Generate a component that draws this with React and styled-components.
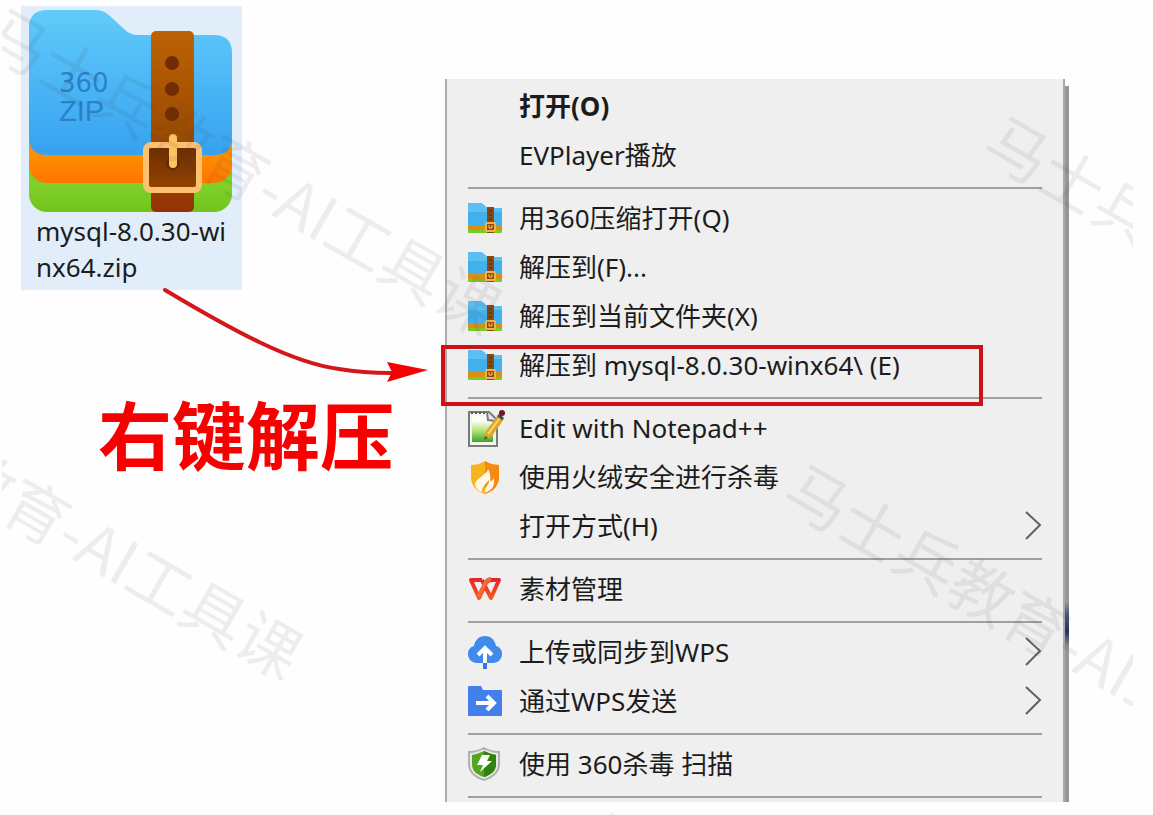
import React from 'react'
import styled, { createGlobalStyle, css } from 'styled-components'

const GlobalStyle = createGlobalStyle`
  * {
    box-sizing: border-box;
  }
  body {
    margin: 0;
    background: #fefefe;
    color: #1c1c1c;
    font-family: "Noto Sans", "Noto Sans CJK SC", sans-serif;
  }
`

const Page = styled.main`
  position: relative;
  display: grid;
  grid-template-columns: 445px minmax(0, 1fr);
  min-height: 100vh;
  padding-right: 84px;
  overflow: hidden;
`

const Aside = styled.section`
  display: flex;
  flex-direction: column;
  align-items: flex-start;
  padding: 6px 0 0 21px;
`

const FileTile = styled.figure`
  width: 221px;
  margin: 0;
  padding: 4px 8px 5px;
  background: #e1eefa;
  svg {
    display: block;
  }
  figcaption {
    padding: 0 7px;
    font-size: 26px;
    line-height: 36px;
    word-break: break-all;
  }
`

const Arrow = styled.svg`
  display: block;
  margin: -3px 0 0 141px;
`

const Caption = styled.h1`
  margin: 0 0 0 77px;
  color: #f90000;
  font-family: "Noto Sans CJK SC", sans-serif;
  font-size: 74px;
  font-weight: 700;
  line-height: 94px;
`

const MenuArea = styled.section`
  padding: 79px 0 12px;
`

const Menu = styled.ul`
  position: relative;
  margin: 0 4px 0 0;
  padding: 4px 21px 0;
  list-style: none;
  background: #efefef;
  border-left: 2px solid #adadad;
  border-right: 2px solid #aaa;
  &::after {
    content: "";
    position: absolute;
    top: 7px;
    right: -6px;
    bottom: 0;
    width: 4px;
    background: linear-gradient(#969696 516px, #47597f 528px, #24365f 546px, #9c9690 562px, #969696 580px);
  }
`

const Item = styled.li`
  position: relative;
`

const Divider = styled.li`
  height: 14px;
  padding: 6px 0;
  &::before {
    content: "";
    display: block;
    height: 2px;
    background: #9f9f9f;
  }
  &:last-child {
    height: 12px;
    padding-bottom: 4px;
  }
`

const MenuButton = styled.button`
  display: grid;
  grid-template-columns: 34px minmax(0, 1fr) auto;
  align-items: center;
  column-gap: 17px;
  width: 100%;
  height: 49px;
  padding: 0 0 3px;
  border: 0;
  background: none;
  color: inherit;
  font-family: inherit;
  font-size: 26px;
  line-height: 36px;
  text-align: left;
  white-space: nowrap;
  cursor: pointer;
  ${props => props.$bold && css`
    font-weight: 700;
  `}
  svg {
    display: block;
  }
`

const Highlight = styled.span`
  position: absolute;
  top: 3px;
  left: -27px;
  right: 59px;
  height: 61px;
  border: 4px solid #cd1216;
  pointer-events: none;
`

const Watermarks = styled.div`
  position: absolute;
  top: 0;
  bottom: 0;
  left: 2px;
  right: 20px;
  overflow: hidden;
  pointer-events: none;
`

const Watermark = styled.span`
  position: absolute;
  left: ${props => props.$x}px;
  top: ${props => props.$y}px;
  color: rgba(70, 70, 70, .09);
  font-family: "Noto Sans CJK SC", sans-serif;
  font-size: 63px;
  line-height: 64px;
  white-space: nowrap;
  transform: rotate(30deg);
  transform-origin: 32px 32px;
`

function FolderLogo() {
  return (
    <svg width="205" height="203" viewBox="0 0 205 203" aria-hidden="true">
      <defs>
        <linearGradient id="blue" x1="0" y1="0" x2="0" y2="1">
          <stop offset="0" stopColor="#61cbfa" />
          <stop offset="1" stopColor="#36a2f0" />
        </linearGradient>
        <linearGradient id="orange" x1="0" y1="0" x2="0" y2="1">
          <stop offset=".75" stopColor="#ff9200" />
          <stop offset="1" stopColor="#ff7500" />
        </linearGradient>
        <linearGradient id="green" x1="0" y1="0" x2="0" y2="1">
          <stop offset=".8" stopColor="#7fd02a" />
          <stop offset="1" stopColor="#71c41c" />
        </linearGradient>
        <linearGradient id="strap" x1="0" y1="0" x2="0" y2="1">
          <stop offset="0" stopColor="#bd6205" />
          <stop offset=".6" stopColor="#9b4a02" />
          <stop offset="1" stopColor="#943305" />
        </linearGradient>
        <linearGradient id="tuck" x1="0" y1="0" x2="0" y2="1">
          <stop offset="0" stopColor="#6b2c00" />
          <stop offset="1" stopColor="#944403" />
        </linearGradient>
      </defs>
      <rect y="70" width="203" height="132" rx="18" fill="url(#green)" />
      <rect y="45" width="203" height="128" rx="18" fill="url(#orange)" />
      <path d="M18 0H67Q75 0 81 6L95 19Q101 25 109 25H185Q203 25 203 43V127Q203 145 185 145H18Q0 145 0 127V18Q0 0 18 0Z" fill="url(#blue)" />
      <g fill="#2c80c9">
        <text x="30" y="82" fontFamily="DejaVu Sans" fontSize="26">360</text>
        <text x="30" y="111" fontFamily="Liberation Sans" fontSize="29">ZIP</text>
      </g>
      <rect x="122" y="21" width="43" height="181" rx="5" fill="url(#strap)" />
      <g fill="#702c02">
        <circle cx="143" cy="53" r="7" />
        <circle cx="143" cy="79" r="7" />
        <circle cx="143" cy="104" r="7" />
      </g>
      <rect x="117" y="135" width="53" height="45" rx="5" fill="url(#tuck)" stroke="#fdc170" strokeWidth="6" />
      <circle cx="144" cy="153" r="7" fill="#652a02" />
      <rect x="140" y="124" width="8" height="34" rx="4" fill="#fcc361" />
    </svg>
  )
}

function ZipIcon() {
  return (
    <svg width="34" height="30" viewBox="0 0 34 30" aria-hidden="true">
      <rect y="12" width="34" height="18" rx="1" fill="#7cc928" />
      <rect y="12" width="34" height="15" fill="#d98f12" />
      <path d="M1 0H12Q14 0 16 2L19 5H33Q34 5 34 6V22H0V1Q0 0 1 0Z" fill="#42b0ec" />
      <path d="M1 0H12Q14 0 16 2L19 5H33Q34 5 34 6V9H0V1Q0 0 1 0Z" fill="#5bbff0" />
      <rect x="19" y="4" width="7" height="26" fill="#864a15" />
      <path d="M21 8h3M21 12h3M21 16h3" stroke="#6e3a0c" strokeWidth="2" />
      <rect x="18" y="20" width="9" height="8" rx="1" fill="#8a4a12" stroke="#f3b04d" strokeWidth="2" />
      <path d="M21 22v3M24 22v3M21 25h3" stroke="#fbd070" strokeWidth="1" />
    </svg>
  )
}

function NotepadIcon() {
  return (
    <svg width="37" height="38" viewBox="0 0 37 38" aria-hidden="true">
      <defs>
        <linearGradient id="page" x1="0" y1="0" x2="0" y2="1">
          <stop offset=".2" stopColor="#fbfdf7" />
          <stop offset=".55" stopColor="#b5e67c" />
          <stop offset="1" stopColor="#3aa524" />
        </linearGradient>
      </defs>
      <path d="M1 3H21L29 11V37H1Z" fill="#f4f5f2" stroke="#777b7b" strokeWidth="2" />
      <path d="M4 7H20L25 12V33H4Z" fill="url(#page)" />
      <path d="M3 4h17" stroke="#565b5b" strokeWidth="2" strokeDasharray="2 2" />
      <path d="M19 3L20 11L28 12" fill="#e8ebea" stroke="#777b7b" strokeWidth="2" />
      <path d="M30 6L18 22L16 31L24 27L36 10Z" fill="#e1a52e" />
      <path d="M32 9L20 25" stroke="#f7d477" strokeWidth="2" />
      <path d="M30 6L35 10" stroke="#4a4d3a" strokeWidth="3" />
      <circle cx="34" cy="4" r="3" fill="#6c1828" />
      <path d="M16 31L17 27L20 29Z" fill="#6c4a1c" />
    </svg>
  )
}

function FlameShieldIcon() {
  return (
    <svg width="34" height="34" viewBox="0 0 34 34" aria-hidden="true">
      <path d="M17 1C12 4 7 5 3 5V17C3 25 8 31 17 34C26 31 31 25 31 17V5C27 5 22 4 17 1Z" fill="#f8b41f" />
      <path d="M17 1C22 4 27 5 31 5V17C31 25 26 31 17 34Z" fill="#f58a13" />
      <path d="M20 9C20 14 8 18 7 24C7 28 11 31 14 32C13 27 18 24 21 20C22 24 16 27 17 33C24 30 27 26 26 18C25 20 24 21 22 21C23 17 22 12 20 9Z" fill="#fff8ea" />
    </svg>
  )
}

function WpsIcon() {
  return (
    <svg width="34" height="26" viewBox="0 0 34 26" aria-hidden="true">
      <defs>
        <linearGradient id="wps" gradientUnits="userSpaceOnUse" x1="0" y1="0" x2="0" y2="26">
          <stop offset="0" stopColor="#e01f2c" />
          <stop offset="1" stopColor="#fa611d" />
        </linearGradient>
      </defs>
      <g fill="none" stroke="url(#wps)" strokeWidth="4" strokeLinejoin="round">
        <path d="M14 4H3L11 22L18 7Q20 4 23 4H31L23 22L17 10" />
        <path d="M14 4L17 10" />
      </g>
      <path d="M10 21L18 6Q20 3 23 3" fill="none" stroke="#f46a35" strokeWidth="4" />
    </svg>
  )
}

function CloudIcon() {
  return (
    <svg width="34" height="36" viewBox="0 0 34 36" aria-hidden="true">
      <path d="M9 29C4 29 0 25 0 20C0 16 2 13 6 12C7 6 11 2 17 2S27 6 28 12C32 13 34 16 34 20C34 25 30 29 25 29Z" fill="#418aed" />
      <path d="M17 15V30M10 21L17 14L24 21" fill="none" stroke="#fff" strokeWidth="4" />
      <path d="M17 29V35" stroke="#3374df" strokeWidth="4" />
    </svg>
  )
}

function SendIcon() {
  return (
    <svg width="34" height="30" viewBox="0 0 34 30" aria-hidden="true">
      <path d="M1 0H13L15 4H33Q34 4 34 5V29Q34 30 33 30H1Q0 30 0 29V1Q0 0 1 0Z" fill="#427fea" />
      <path d="M8 17H25M19 10L26 17L19 24" fill="none" stroke="#fff" strokeWidth="4" />
    </svg>
  )
}

function BoltShieldIcon() {
  return (
    <svg width="34" height="34" viewBox="0 0 34 34" aria-hidden="true">
      <path d="M16 1C11 4 6 5 1 5V17C1 25 7 30 16 33C25 30 31 25 31 17V5C26 5 21 4 16 1Z" fill="#e9eae8" stroke="#b0b4ae" strokeWidth="2" />
      <path d="M16 4C12 6 8 7 4 8V17C4 24 9 28 16 30C23 28 28 24 28 17V8C24 7 20 6 16 4Z" fill="#55a521" />
      <path d="M16 4C20 6 24 7 28 8V17C28 24 23 28 16 30Z" fill="#338312" />
      <path d="M14 8L22 8L19 14H24L12 25L15 18H9Z" fill="#fff" />
    </svg>
  )
}

function Chevron() {
  return (
    <svg width="17" height="30" viewBox="0 0 17 30" fill="none" stroke="#665f5b" strokeWidth="2" aria-hidden="true">
      <path d="M1 1L15 14L1 28" />
    </svg>
  )
}

const groups = [
  [
    { label: '打开(O)', bold: true },
    { label: 'EVPlayer播放' },
  ],
  [
    { label: '用360压缩打开(Q)', icon: ZipIcon },
    { label: '解压到(F)...', icon: ZipIcon },
    { label: '解压到当前文件夹(X)', icon: ZipIcon },
    { label: '解压到 mysql-8.0.30-winx64\\ (E)', icon: ZipIcon, highlight: true },
  ],
  [
    { label: 'Edit with Notepad++', icon: NotepadIcon },
    { label: '使用火绒安全进行杀毒', icon: FlameShieldIcon },
    { label: '打开方式(H)', submenu: true },
  ],
  [
    { label: '素材管理', icon: WpsIcon },
  ],
  [
    { label: '上传或同步到WPS', icon: CloudIcon, submenu: true },
    { label: '通过WPS发送', icon: SendIcon, submenu: true },
  ],
  [
    { label: '使用 360杀毒 扫描', icon: BoltShieldIcon },
  ],
]

const marks = [[-14, 7], [-213, 351], [986, 115], [786, 463], [586, 811]]

function MenuItem({ label, icon: Icon, bold, highlight, submenu }) {
  return (
    <Item>
      <MenuButton type="button" $bold={bold} aria-haspopup={submenu ? 'menu' : undefined}>
        {Icon ? <Icon /> : <span />}
        <span>{label}</span>
        {submenu && <Chevron />}
      </MenuButton>
      {highlight && <Highlight />}
    </Item>
  )
}

export default function App() {
  return (
    <Page>
      <GlobalStyle />
      <Aside>
        <FileTile>
          <FolderLogo />
          <figcaption>mysql-8.0.30-winx64.zip</figcaption>
        </FileTile>
        <Arrow width="268" height="98" viewBox="0 0 268 98" aria-hidden="true">
          <path d="M3 3C70 43 130 76 177 82C195 85 215 86 229 86" fill="none" stroke="#d3181c" strokeWidth="4" strokeLinecap="round" />
          <path d="M225 75L266 83L225 95L230 85Z" fill="#f30000" />
        </Arrow>
        <Caption>右键解压</Caption>
      </Aside>
      <MenuArea>
        <Menu>
          {groups.map((group, i) => (
            <React.Fragment key={i}>
              {group.map(item => <MenuItem key={item.label} {...item} />)}
              <Divider role="separator" />
            </React.Fragment>
          ))}
        </Menu>
      </MenuArea>
      <Watermarks aria-hidden="true">
        {marks.map(([x, y]) => <Watermark key={x} $x={x} $y={y}>马士兵教育-AI工具课</Watermark>)}
      </Watermarks>
    </Page>
  )
}
